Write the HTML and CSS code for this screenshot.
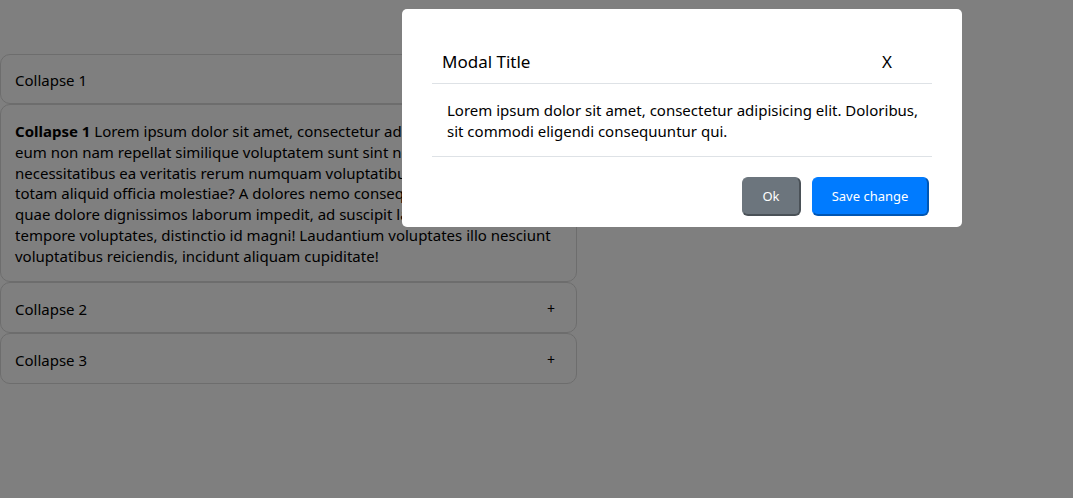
FILE: index.html
```html
<!DOCTYPE html>
<html>
<head>
<meta charset="utf-8">
<link rel="stylesheet" href="styles.css">
</head>
<body>
<div class="page">
  <div class="accordion">
    <div class="acc-head">Collapse 1</div>
    <div class="acc-body"><b>Collapse 1</b> Lorem ipsum dolor sit amet, consectetur adipisicing elit. Quas<br>
      eum non nam repellat similique voluptatem sunt sint nemo fugiat<br>
      necessitatibus ea veritatis rerum numquam voluptatibus voluptas,<br>
      totam aliquid officia molestiae? A dolores nemo consequuntur<br>
      quae dolore dignissimos laborum impedit, ad suscipit laboriosam<br>
      tempore voluptates, distinctio id magni! Laudantium voluptates illo nesciunt<br>
      voluptatibus reiciendis, incidunt aliquam cupiditate!</div>
    <div class="acc-head"><span>Collapse 2</span><span class="plus">+</span></div>
    <div class="acc-head"><span>Collapse 3</span><span class="plus">+</span></div>
  </div>
</div>
<div class="overlay"></div>
<div class="modal">
  <div class="modal-header">
    <span class="modal-title">Modal Title</span>
    <span class="close">X</span>
  </div>
  <div class="modal-body">Lorem ipsum dolor sit amet, consectetur adipisicing elit. Doloribus, sit commodi eligendi consequuntur qui.</div>
  <div class="modal-footer">
    <button class="btn btn-gray">Ok</button>
    <button class="btn btn-blue">Save change</button>
  </div>
</div>
</body>
</html>
```
FILE: styles.css
```css
html, body {
  margin: 0;
  padding: 0;
  background: #fff;
  font-family: "Noto Sans", "Open Sans", sans-serif;
  font-size: 15px;
  color: #000;
  height: 100%;
}
.page {
  padding-top: 54px;
}
.accordion {
  width: 577px;
}
.acc-head {
  box-sizing: border-box;
  height: 51px;
  border: 1px solid #dadada;
  border-radius: 10px;
  padding: 2px 14px 0;
  display: flex;
  align-items: center;
  justify-content: space-between;
}
.acc-head:first-child {
  height: 50px;
}
.acc-body {
  box-sizing: border-box;
  border: 1px solid #dadada;
  border-radius: 10px;
  padding: 16px 14px 14px;
  line-height: 20.8px;
  height: 178px;
}
.plus {
  font-size: 14px;
  margin-right: 7px;
}
.overlay {
  position: fixed;
  inset: 0;
  background: rgba(0, 0, 0, 0.5);
}
.modal {
  position: absolute;
  left: 402px;
  top: 9px;
  width: 560px;
  box-sizing: border-box;
  background: #fff;
  border-radius: 5px;
  padding: 30px 30px 10px;
}
.modal-header {
  display: flex;
  justify-content: space-between;
  align-items: center;
  height: 45px;
  box-sizing: border-box;
  padding: 0 40px 0 10px;
  border-bottom: 1px solid #dee2e6;
  font-size: 17px;
}
.modal-body {
  padding: 16px 2px 14px 15px;
  line-height: 21px;
  border-bottom: 1px solid #dee2e6;
}
.modal-footer {
  display: flex;
  justify-content: flex-end;
  gap: 11px;
  padding: 20px 3px 1px;
}
.btn {
  font-family: "Noto Sans", "Open Sans", sans-serif;
  font-size: 13px;
  color: #fff;
  height: 39px;
  border-radius: 6px;
  border: 1px solid transparent;
  border-right-width: 2px;
  border-bottom-width: 2px;
  padding: 0;
}
.btn-gray {
  width: 59px;
  background: #6c757d;
  border-color: #6c757d #4a5157 #4a5157 #6c757d;
}
.btn-blue {
  width: 117px;
  background: #007bff;
  border-color: #007bff #0056b3 #0056b3 #007bff;
}
```
